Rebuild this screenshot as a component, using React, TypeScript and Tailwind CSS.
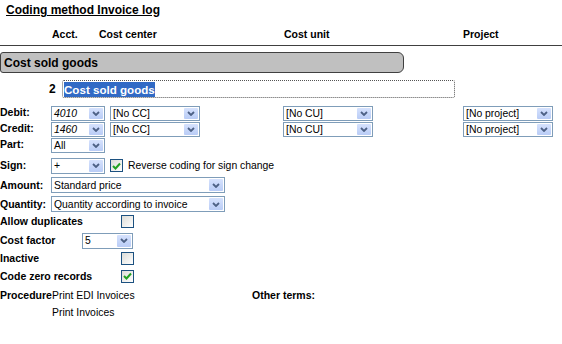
import React from 'react';

type SelectProps = {
  value: string;
  width: string;
  italic?: boolean;
  tall?: boolean;
};

function Select({ value, width, italic, tall }: SelectProps) {
  return (
    <div
      className={`${width} ${tall ? 'h-[16px]' : 'h-[15px]'} flex items-center border border-[#7f9db9] bg-white`}
    >
      <span
        className={`flex-1 truncate pl-[2px] text-[10.4px] leading-[13px] ${italic ? 'italic' : ''}`}
      >
        {value}
      </span>
      <span className="mr-[1px] flex h-[calc(100%-2px)] w-[14px] items-center justify-center rounded-[1px] bg-gradient-to-b from-[#d6e2fd] to-[#b9ccf6]">
        <svg width="8" height="5" viewBox="0 0 8 5">
          <polyline
            points="1,1 4,4 7,1"
            fill="none"
            stroke="#4d6185"
            strokeWidth="1.8"
          />
        </svg>
      </span>
    </div>
  );
}

function Checkbox({ checked }: { checked?: boolean }) {
  return (
    <span className="flex h-[13px] w-[13px] items-center justify-center border border-[#1c5180] bg-gradient-to-br from-[#dcdcd7] to-white">
      {checked ? (
        <svg width="9" height="8" viewBox="0 0 9 8">
          <polyline
            points="1,4 3.5,6.5 8,1.5"
            fill="none"
            stroke="#21a121"
            strokeWidth="2"
          />
        </svg>
      ) : null}
    </span>
  );
}

function Label({ children, width = 'w-[51px]' }: { children: React.ReactNode; width?: string }) {
  return (
    <span className={`${width} shrink-0 overflow-hidden whitespace-nowrap text-[10.5px] font-bold leading-[13px]`}>
      {children}
    </span>
  );
}

export default function App() {
  return (
    <div className="relative h-[344px] w-[562px] overflow-hidden bg-white font-['Liberation_Sans',Arial,sans-serif] text-black">
      <div className="pl-[6px] pt-[3px] text-[12px] font-bold leading-[14px] underline">
        Coding method Invoice log
      </div>

      <div className="flex border-b border-[#404040] pb-[4px] pt-[11px] text-[10.5px] font-bold leading-[13px]">
        <span className="w-[52px]" />
        <span className="w-[47px]">Acct.</span>
        <span className="w-[185px]">Cost center</span>
        <span className="w-[179px]">Cost unit</span>
        <span>Project</span>
      </div>

      <div className="mt-[6px] flex h-[21px] w-[404px] items-center rounded-l-[3px] rounded-r-[6px] border border-[#404040] bg-[#c0c0c0] pl-[3px] text-[12px] font-bold">
        Cost sold goods
      </div>

      <div className="mt-[7px] flex h-[18px] items-center">
        <span className="w-[49px]" />
        <span className="w-[13px] text-[12px] font-bold">2</span>
        <div className="flex h-[18px] w-[393px] items-center rounded-[2px] border border-dotted border-[#555] pl-[1px]">
          <span className="bg-[#316ac5] text-[11.6px] font-bold leading-[15px] text-white">
            Cost sold goods
          </span>
        </div>
      </div>

      <div className="mt-[8px] flex h-[16px] items-start">
        <Label>Debit:</Label>
        <Select value="4010" width="w-[54px]" italic />
        <span className="w-[5px]" />
        <Select value="[No CC]" width="w-[90px]" />
        <span className="w-[83px]" />
        <Select value="[No CU]" width="w-[90px]" />
        <span className="w-[90px]" />
        <Select value="[No project]" width="w-[90px]" />
      </div>
      <div className="flex h-[16px] items-start">
        <Label>Credit:</Label>
        <Select value="1460" width="w-[54px]" italic />
        <span className="w-[5px]" />
        <Select value="[No CC]" width="w-[90px]" />
        <span className="w-[83px]" />
        <Select value="[No CU]" width="w-[90px]" />
        <span className="w-[90px]" />
        <Select value="[No project]" width="w-[90px]" />
      </div>
      <div className="flex h-[16px] items-start">
        <Label>Part:</Label>
        <Select value="All" width="w-[54px]" />
      </div>

      <div className="mt-[3px] flex h-[17px] items-center">
        <Label>Sign:</Label>
        <Select value="+" width="w-[54px]" tall />
        <span className="w-[5px]" />
        <Checkbox checked />
        <span className="pl-[5px] text-[10.4px] leading-[13px]">Reverse coding for sign change</span>
      </div>
      <div className="mt-[2px] flex h-[18px] items-center">
        <Label>Amount:</Label>
        <Select value="Standard price" width="w-[174px]" tall />
      </div>
      <div className="mt-[1px] flex h-[18px] items-center">
        <Label>Quantity:</Label>
        <Select value="Quantity according to invoice" width="w-[174px]" tall />
      </div>

      <div className="mt-[1px] flex h-[14px] items-center">
        <Label width="w-[121px]">Allow duplicates</Label>
        <Checkbox />
      </div>
      <div className="mt-[4px] flex h-[17px] items-center">
        <Label width="w-[82px]">Cost factor</Label>
        <Select value="5" width="w-[51px]" tall />
      </div>
      <div className="mt-[2px] flex h-[14px] items-center">
        <Label width="w-[121px]">Inactive</Label>
        <Checkbox />
      </div>
      <div className="mt-[4px] flex h-[14px] items-center">
        <Label width="w-[121px]">Code zero records</Label>
        <Checkbox checked />
      </div>

      <div className="mt-[4px] flex h-[16px] items-center">
        <Label width="w-[52px]">Procedure</Label>
        <span className="w-[200px] text-[10.4px] leading-[13px]">Print EDI Invoices</span>
        <span className="text-[10.5px] font-bold leading-[13px]">Other terms:</span>
      </div>
      <div className="mt-[1px] flex h-[16px] items-center">
        <span className="w-[52px]" />
        <span className="text-[10.4px] leading-[13px]">Print Invoices</span>
      </div>
    </div>
  );
}
